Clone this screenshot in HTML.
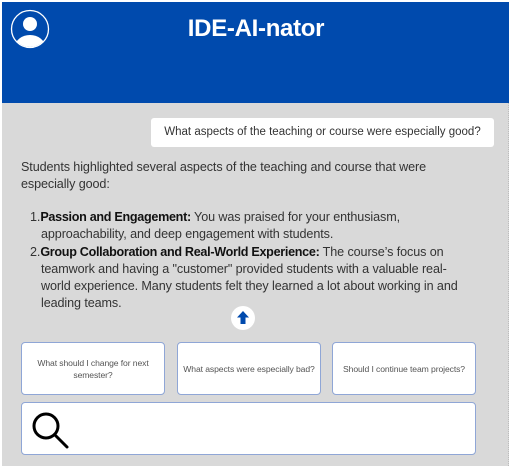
<!DOCTYPE html>
<html><head><style>
*{margin:0;padding:0;box-sizing:border-box}
body{width:512px;height:469px;background:#fff;position:relative;overflow:hidden;font-family:"Liberation Sans",sans-serif}
.frame{position:absolute;left:2px;top:2px;width:507px;height:464px;background:#d9d9d9;border-right:1px dotted #bbb}
.hdr{position:absolute;left:2px;top:2px;width:507px;height:101px;background:#004aad}
.title{position:absolute;left:0;width:512px;top:15px;text-align:center;color:#fff;font-weight:bold;font-size:24px;letter-spacing:-0.3px}
.ln{position:absolute;white-space:nowrap;font-size:12.6px;color:#333;letter-spacing:-0.1px}
.ln b{color:#111;letter-spacing:-0.3px}
.bub{position:absolute;left:151px;top:118px;width:343px;height:29px;background:#fff;border-radius:3px;font-size:11.5px;color:#333;line-height:29px;text-align:center;white-space:nowrap}
.btn{position:absolute;top:342px;width:144px;height:53px;background:#fff;border:1px solid #8fa6d6;border-radius:4px;font-size:8.6px;color:#555;display:flex;align-items:center;justify-content:center;text-align:center;line-height:12px;padding:0 1px;letter-spacing:-0.1px}
.search{position:absolute;left:21px;top:402px;width:455px;height:53px;background:#fff;border:1px solid #8fa6d6;border-radius:4px}
</style></head><body>
<div class="frame"></div>
<div class="hdr"></div>
<svg style="position:absolute;left:10px;top:9px" width="40" height="40" viewBox="0 0 40 40">
<defs><clipPath id="c"><circle cx="20" cy="20" r="18"/></clipPath></defs>
<circle cx="20" cy="20" r="18.5" fill="none" stroke="#fff" stroke-width="1.3"/>
<g clip-path="url(#c)" fill="#fff"><circle cx="20" cy="15" r="7"/><ellipse cx="20" cy="38" rx="15" ry="12"/></g>
</svg>
<div class="title">IDE-AI-nator</div>
<div class="bub">What aspects of the teaching or course were especially good?</div>
<div class="ln" style="left:21px;top:160px">Students highlighted several aspects of the teaching and course that were</div>
<div class="ln" style="left:21px;top:177px">especially good:</div>
<div class="ln" style="left:30px;top:210px">1.<b>Passion and Engagement:</b> You was praised for your enthusiasm,</div>
<div class="ln" style="left:41px;top:227px">approachability, and deep engagement with students.</div>
<div class="ln" style="left:30px;top:245px">2.<b>Group Collaboration and Real-World Experience:</b> The course’s focus on</div>
<div class="ln" style="left:41px;top:262px">teamwork and having a "customer" provided students with a valuable real-</div>
<div class="ln" style="left:41px;top:279px">world experience. Many students felt they learned a lot about working in and</div>
<div class="ln" style="left:41px;top:296px">leading teams.</div>
<svg style="position:absolute;left:231px;top:306px" width="24" height="24" viewBox="0 0 24 24">
<circle cx="12" cy="12" r="12" fill="#fff"/>
<path d="M12 5 L18 11.5 L14.5 11.5 L14.5 18 L9.5 18 L9.5 11.5 L6 11.5 Z" fill="#004aad"/>
</svg>
<div class="btn" style="left:21px;padding:0 8px">What should I change for next semester?</div>
<div class="btn" style="left:177px">What aspects were especially bad?</div>
<div class="btn" style="left:332px">Should I continue team projects?</div>
<div class="search"></div>
<svg style="position:absolute;left:30px;top:410px" width="40" height="40" viewBox="0 0 40 40">
<circle cx="16" cy="16" r="12" fill="none" stroke="#000" stroke-width="3"/>
<path d="M24.5 24.5 L37 37" stroke="#000" stroke-width="3" stroke-linecap="round"/>
</svg>
</body></html>
